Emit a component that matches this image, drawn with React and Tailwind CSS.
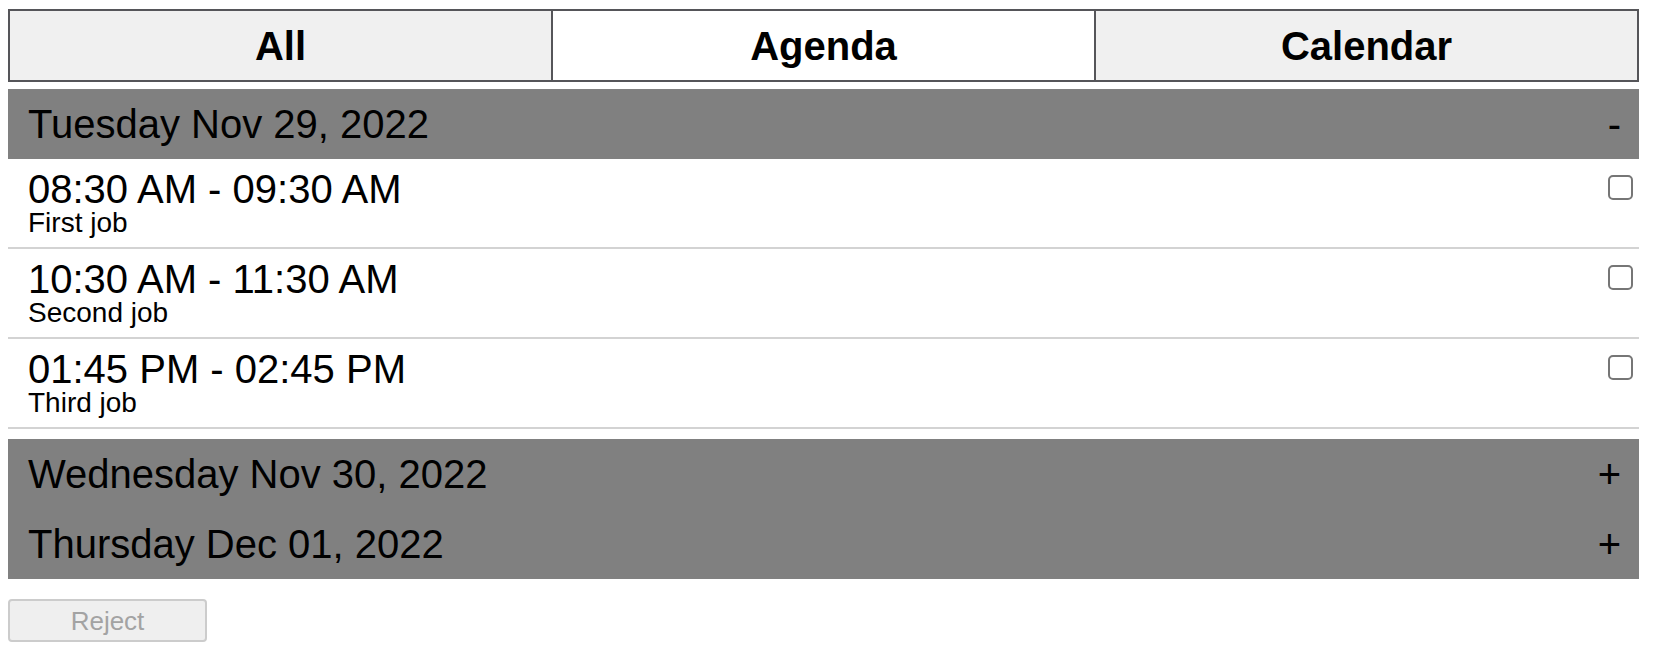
import React from "react";

const jobs = [
  { time: "08:30 AM - 09:30 AM", name: "First job" },
  { time: "10:30 AM - 11:30 AM", name: "Second job" },
  { time: "01:45 PM - 02:45 PM", name: "Third job" },
];

function DayHeader({ label, sign }) {
  return (
    <div className="flex h-[70px] items-center justify-between bg-[#808080] pl-[20px] pr-[18px] text-[40px] leading-[46px] text-black">
      <span>{label}</span>
      <span>{sign}</span>
    </div>
  );
}

export default function App() {
  return (
    <div
      className="min-h-[653px] bg-white pl-[8px] pr-[14px] pt-[9px]"
      style={{ fontFamily: '"Liberation Sans", Arial, sans-serif' }}
    >
      <div className="flex h-[73px] border-2 border-[#555559]">
        <div className="flex flex-1 items-center justify-center bg-[#f0f0f0] text-[40px] font-bold leading-[46px] text-black">
          All
        </div>
        <div className="flex flex-1 items-center justify-center border-l-2 border-[#555559] bg-white text-[40px] font-bold leading-[46px] text-black">
          Agenda
        </div>
        <div className="flex flex-1 items-center justify-center border-l-2 border-[#555559] bg-[#f0f0f0] text-[40px] font-bold leading-[46px] text-black">
          Calendar
        </div>
      </div>

      <div className="mt-[7px]">
        <DayHeader label="Tuesday Nov 29, 2022" sign="-" />
        <div>
          {jobs.map((j) => (
            <div
              key={j.name}
              className="flex items-start justify-between border-b-2 border-[#d3d3d3] pb-[10px] pl-[20px] pr-[6px] pt-[10px] text-black"
            >
              <div className="flex flex-col">
                <span className="block h-[40px] text-[40px] leading-[40px]">{j.time}</span>
                <span className="block h-[28px] text-[28px] leading-[28px]">{j.name}</span>
              </div>
              <div className="mt-[6px] h-[25px] w-[25px] rounded-[5px] border-2 border-[#767676] bg-white" />
            </div>
          ))}
        </div>
      </div>

      <div className="mt-[10px]">
        <DayHeader label="Wednesday Nov 30, 2022" sign="+" />
        <DayHeader label="Thursday Dec 01, 2022" sign="+" />
      </div>

      <button
        disabled
        className="mt-[20px] flex h-[43px] w-[199px] items-center justify-center rounded-[4px] border-2 border-[#cccccc] bg-[#efefef] text-[26px] leading-none text-[#a3a3a3]"
      >
        Reject
      </button>
    </div>
  );
}
